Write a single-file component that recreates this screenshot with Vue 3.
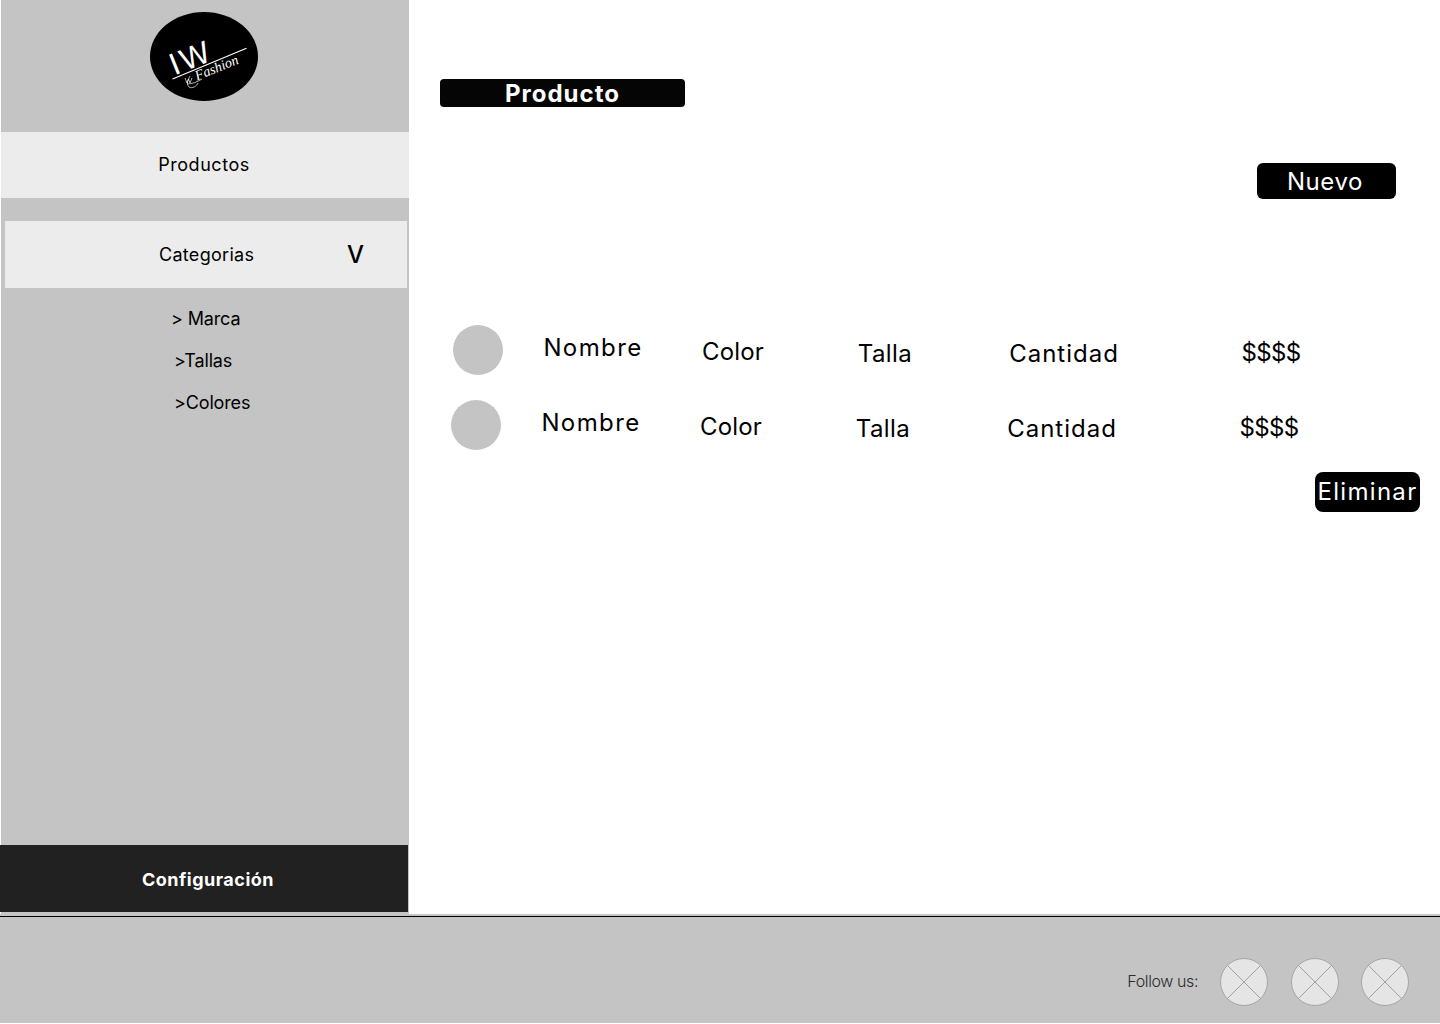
<template>
  <div class="page">
    <div class="top">
      <!-- menu lateral -->
      <aside class="sidebar">
        <div class="logo-box">
          <svg class="logo" width="108" height="89" viewBox="0 0 108 89">
            <ellipse cx="54" cy="44.5" rx="54" ry="44.5" fill="#000" />
            <text class="logo-iw" transform="translate(24.5 63.5) rotate(-22)">IW</text>
            <line x1="22.5" y1="67" x2="96.5" y2="36.3" stroke="#fff" stroke-width="1.2" />
            <text class="logo-fashion" transform="translate(47 68.5) rotate(-22)">Fashion</text>
            <path d="M35 66l2 5 1.5-4 1.5 4 2-5M40 64c-2 4-4 8-1 11 3 2 8-1 9-4M37 72c5 0 10-2 15-5" fill="none" stroke="#fff" stroke-width="0.7" />
          </svg>
        </div>
        <div class="item item-productos">Productos</div>
        <div class="item item-categorias">
          <span class="cat-label">Categorias</span>
          <span class="cat-arrow">V</span>
        </div>
        <ul class="submenu">
          <li class="sub-marca">&gt; Marca</li>
          <li class="sub-tallas">&gt;Tallas</li>
          <li class="sub-colores">&gt;Colores</li>
        </ul>
        <div class="config">Configuración</div>
      </aside>

      <!-- contenido -->
      <main class="content">
        <div class="title">Producto</div>
        <div class="new-row">
          <button class="btn btn-new">Nuevo</button>
        </div>
        <div class="rows">
          <div v-for="(row, i) in rows" :key="i" class="row" :class="'row-' + i">
            <div class="avatar"></div>
            <span class="c-nombre">{{ row.nombre }}</span>
            <span class="c-color">{{ row.color }}</span>
            <span class="c-talla">{{ row.talla }}</span>
            <span class="c-cantidad">{{ row.cantidad }}</span>
            <span class="c-precio">{{ row.precio }}</span>
          </div>
        </div>
        <div class="delete-row">
          <button class="btn btn-delete">Eliminar</button>
        </div>
      </main>
    </div>

    <footer class="footer">
      <span class="follow">Follow us:</span>
      <svg v-for="n in 3" :key="n" class="social" width="50" height="50" viewBox="0 0 50 50">
        <circle cx="25" cy="25" r="23.5" fill="#e5e5e5" stroke="#a6a6a6" />
        <path d="M8.4 8.4L41.6 41.6M41.6 8.4L8.4 41.6" stroke="#a0a0a0" stroke-width="1" />
      </svg>
    </footer>
  </div>
</template>

<script setup>
const rows = [
  { nombre: "Nombre", color: "Color", talla: "Talla", cantidad: "Cantidad", precio: "$$$$" },
  { nombre: "Nombre", color: "Color", talla: "Talla", cantidad: "Cantidad", precio: "$$$$" },
];
</script>

<style>
html,
body {
  margin: 0;
  background: #fff;
}
</style>

<style scoped>
.page {
  width: 1440px;
  height: 1024px;
  overflow: hidden;
  display: flex;
  flex-direction: column;
  font-family: Inter, "Liberation Sans", sans-serif;
  color: #000;
}

.top {
  display: flex;
  height: 914px;
  padding-left: 1px;
  box-sizing: border-box;
}

/* menu lateral */
.sidebar {
  width: 408px;
  flex: none;
  background: #c4c4c4;
  display: flex;
  flex-direction: column;
}

.logo-box {
  height: 132px;
  padding-top: 12px;
  padding-left: 149px;
  box-sizing: border-box;
}

.logo {
  display: block;
}

.logo-iw {
  font-family: "Liberation Sans", sans-serif;
  font-size: 31px;
  letter-spacing: 3px;
  fill: #fff;
}

.logo-fashion {
  font-family: "Liberation Serif", serif;
  font-style: italic;
  font-size: 14px;
  fill: #fff;
}

.item {
  background: #ececec;
  display: flex;
  align-items: center;
  font-size: 18px;
  letter-spacing: 0.3px;
}

.item-productos {
  height: 66px;
  justify-content: center;
  padding-bottom: 1px;
  padding-right: 2px;
  box-sizing: border-box;
  letter-spacing: 0.55px;
}

.item-categorias {
  height: 67px;
  margin: 23px 2px 0 4px;
  padding-left: 154px;
  box-sizing: border-box;
}

.cat-label {
  width: 188px;
}

.cat-arrow {
  font-size: 24px;
  font-weight: 500;
}

.submenu {
  list-style: none;
  margin: 0;
  padding: 20px 0 0;
  font-size: 18px;
  letter-spacing: -0.15px;
  flex: 1;
}

.submenu li {
  height: 42px;
  line-height: 22px;
}

.sub-marca {
  padding-left: 170px;
}

.sub-tallas,
.sub-colores {
  padding-left: 173px;
}

.config {
  height: 67px;
  width: 408px;
  margin-left: -1px;
  margin-bottom: 2px;
  background: #212121;
  color: #fff;
  font-size: 18px;
  font-weight: 700;
  letter-spacing: 0.5px;
  display: flex;
  align-items: center;
  justify-content: center;
  padding-left: 8px;
  padding-top: 2px;
  box-sizing: border-box;
}

/* contenido */
.content {
  flex: 1;
  padding-left: 31px;
  padding-top: 79px;
  box-sizing: border-box;
}

.title {
  width: 245px;
  height: 28px;
  background: #050505;
  border-radius: 4px;
  color: #fff;
  font-size: 24px;
  font-weight: 700;
  letter-spacing: 1px;
  line-height: 30px;
  text-align: center;
}

.new-row {
  margin-top: 56px;
  padding-left: 817px;
}

.btn {
  display: block;
  border: none;
  background: #000;
  color: #fff;
  font-family: inherit;
  font-size: 24px;
  padding: 0;
}

.btn-new {
  width: 139px;
  height: 36px;
  border-radius: 6px;
  letter-spacing: 0.6px;
  padding-right: 3px;
}

.rows {
  margin-top: 126px;
  display: flex;
  flex-direction: column;
  gap: 25px;
}

.row {
  display: grid;
  grid-template-columns: 50px 180px 100px 204px 154px 260px;
  height: 50px;
  font-size: 24px;
  line-height: 30px;
  text-align: center;
  letter-spacing: 0.2px;
}

.row-0 {
  margin-left: 13px;
}

.row-1 {
  margin-left: 11px;
}

.avatar {
  width: 50px;
  height: 50px;
  border-radius: 50%;
  background: #c4c4c4;
}

.c-nombre {
  margin-top: 8px;
  letter-spacing: 1.4px;
}

.c-color {
  margin-top: 12px;
}

.c-precio {
  margin-top: 13px;
  letter-spacing: -0.6px;
}

.c-talla {
  margin-top: 14px;
  letter-spacing: 0.4px;
}

.c-cantidad {
  margin-top: 14px;
  letter-spacing: 1px;
}

.delete-row {
  margin-top: 22px;
  padding-left: 875px;
}

.btn-delete {
  width: 105px;
  height: 40px;
  border-radius: 8px;
  letter-spacing: 1.3px;
  padding-bottom: 2px;
}

/* pie */
.footer {
  height: 107px;
  margin-top: 2px;
  border-top: 1px solid #000;
  box-shadow: 0 -2px 0 #c4c4c4;
  background: #c4c4c4;
  display: flex;
  align-items: center;
  justify-content: flex-end;
  padding-right: 30px;
  padding-top: 21px;
  box-sizing: border-box;
}

.follow {
  font-size: 16px;
  font-weight: 300;
  letter-spacing: -0.4px;
  color: #2b2b2b;
  margin-right: 21px;
}

.social {
  display: block;
  margin-top: 2px;
}

.social:nth-of-type(2) {
  margin-left: 21px;
}

.social:nth-of-type(3) {
  margin-left: 20px;
}
</style>
